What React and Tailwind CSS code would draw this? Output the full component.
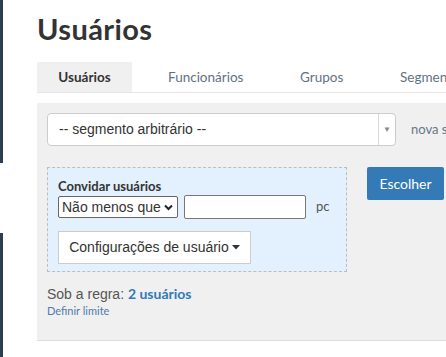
export default function App() {
  return (
    <div className="flex h-screen w-full overflow-hidden bg-white">
      {/* sidebar edge */}
      <div className="flex w-[3px] shrink-0 flex-col">
        <div className="h-[163px] bg-[#2c3e50]" />
        <div className="h-[70px] bg-white" />
        <div className="flex-1 bg-[#2c3e50]" />
      </div>

      <div className="ml-[34px] flex min-w-0 flex-1 flex-col">
        <h1 className="mt-[11px] h-[35px] text-[29px] font-bold leading-[35px] tracking-[0.4px] text-[#333]" style={{ fontFamily: "Lato, sans-serif" }}>
          Usuários
        </h1>

        {/* tabs */}
        <div
          className="mt-[16px] flex h-[31px] w-[520px] border-b border-[#e6e6e6] text-[13.5px] text-[#5f7282]"
          style={{ fontFamily: "Lato, sans-serif" }}
        >
          <div className="flex w-[95px] items-center justify-center bg-[#f0f0f0] font-bold text-[#333]">Usuários</div>
          <div className="flex w-[132px] items-center pl-[36px]">Funcionários</div>
          <div className="flex w-[100px] items-center pl-[36px]">Grupos</div>
          <div className="flex items-center whitespace-nowrap pl-[36px]">Segmentos</div>
        </div>

        {/* panel */}
        <div className="mt-[10px] h-[238px] w-[520px] border-b border-[#dcdcdc] bg-[#f0f0f0] pl-[10px] pt-[10px]" style={{ fontFamily: "'Liberation Sans', Arial, sans-serif" }}>
          <div className="flex items-center">
            <div className="flex h-[33px] w-[349px] items-center rounded-[4px] border border-[#cccccc] bg-white">
              <span className="flex-1 pl-[11px] text-[14px] text-[#333]">-- segmento arbitrário --</span>
              <span className="flex h-full w-[17px] items-center justify-center border-l border-[#d9d9d9] text-[8px] text-[#888]">▼</span>
            </div>
            <span className="ml-[15px] whitespace-nowrap text-[13px] text-[#667788]" style={{ fontFamily: "Lato, sans-serif" }}>
              nova segmento
            </span>
          </div>

          <div className="mt-[21px] flex items-start">
            <div className="h-[105px] w-[300px] border border-dashed border-[#bdbdbd] bg-[#e3f0fd] pl-[10px] pt-[10px]">
              <div className="text-[13px] font-bold leading-[16px] text-[#333]" style={{ fontFamily: "Lato, sans-serif" }}>
                Convidar usuários
              </div>
              <div className="mt-[1px] flex items-center">
                <div className="flex h-[22px] w-[120px] items-center justify-between rounded-[2px] border border-[#666] bg-white pl-[3px] pr-[4px] text-[14px] text-[#333]">
                  <span>Não menos que</span>
                  <svg width="9" height="7" viewBox="0 0 9 7">
                    <path d="M1 1.5 L4.5 5 L8 1.5" fill="none" stroke="#222" strokeWidth="2" />
                  </svg>
                </div>
                <div className="ml-[6px] h-[24px] w-[122px] rounded-[2px] border border-[#777] bg-white" />
                <span className="ml-[10px] text-[13px] text-[#555]" style={{ fontFamily: "Lato, sans-serif" }}>pc</span>
              </div>
              <div className="mt-[12px] flex h-[33px] w-[193px] items-center justify-center border border-[#cccccc] bg-white text-[14px] text-[#333]">
                Configurações de usuário
                <svg className="ml-[3px]" width="8" height="5" viewBox="0 0 8 5">
                  <path d="M0 0 L8 0 L4 4.5 Z" fill="#333" />
                </svg>
              </div>
            </div>
            <div className="ml-[20px] flex h-[33px] w-[77px] items-center justify-center rounded-[2px] bg-[#337ab7] text-[14px] text-white" style={{ fontFamily: "Lato, sans-serif" }}>
              Escolher
            </div>
          </div>

          <div className="mt-[13px] text-[14px] leading-[18px] text-[#555]">
            Sob a regra:{" "}
            <span className="font-bold text-[#337ab7]" style={{ fontFamily: "Lato, sans-serif" }}>2 usuários</span>
          </div>
          <div className="mt-[1px] text-[11px] leading-[14px] text-[#4f7bab]" style={{ fontFamily: "Lato, sans-serif" }}>
            Definir limite
          </div>
        </div>
      </div>
    </div>
  );
}
